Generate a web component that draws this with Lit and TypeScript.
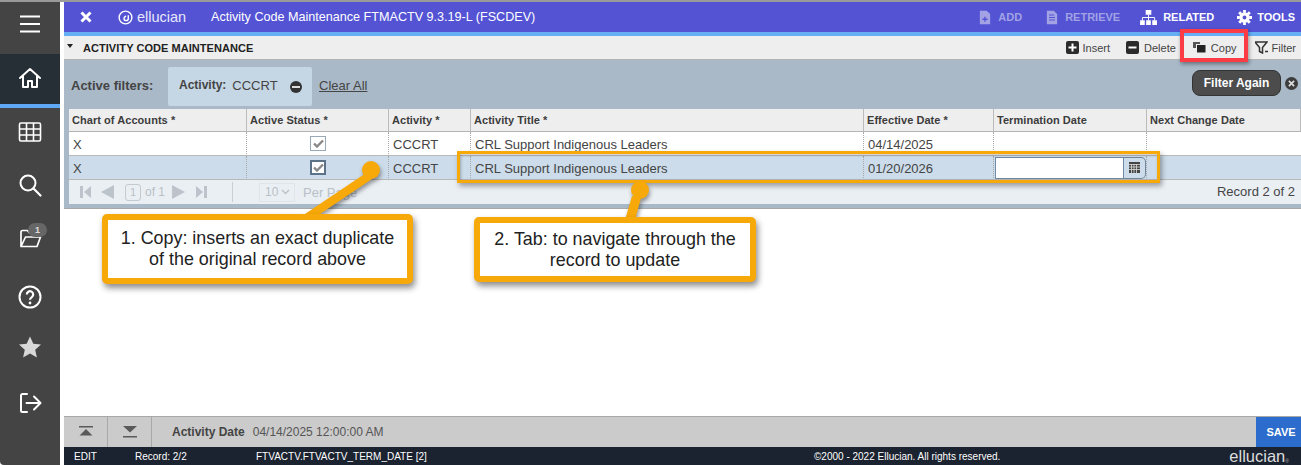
import { LitElement, html, css, svg } from "lit";
import { customElement } from "lit/decorators.js";

const ICO = {
  home: svg`<path d="M2 12 12 3l10 9M5 10v11h5v-6h4v6h5V10" fill="none" stroke="#fff" stroke-width="2" stroke-linejoin="round" stroke-linecap="round"/>`,
  grid: svg`<rect x="1.5" y="3" width="21" height="18" rx="1.5" fill="none" stroke="#fff" stroke-width="1.6"/><path d="M1.5 9h21M1.5 15h21M8.5 3v18M15.5 3v18" stroke="#fff" stroke-width="1.6"/>`,
  search: svg`<circle cx="10" cy="10" r="7.5" fill="none" stroke="#fff" stroke-width="2"/><path d="m15.5 15.5 7 7" stroke="#fff" stroke-width="2.2" stroke-linecap="round"/>`,
  folder: svg`<path d="M3 20.5V6a1.5 1.5 0 0 1 1.5-1.5h5l2 2.5H18a1.5 1.5 0 0 1 1.5 1.5V11M3 20.5h16l3.5-9.5H7.5z" fill="none" stroke="#fff" stroke-width="1.7" stroke-linejoin="round"/>`,
  help: svg`<circle cx="12" cy="12" r="10.5" fill="none" stroke="#fff" stroke-width="2"/><path d="M8.8 9.4a3.2 3.2 0 1 1 5 2.7c-1.2.8-1.8 1.2-1.8 2.6" fill="none" stroke="#fff" stroke-width="2.2"/><circle cx="12" cy="18" r="1.4" fill="#fff"/>`,
  star: svg`<path d="M12 1.5l3.3 7.3 7.7.8-5.8 5.2 1.7 7.7L12 18.5l-6.9 4 1.7-7.7L1 9.6l7.7-.8z" fill="#d8d8d8"/>`,
  out: svg`<path d="M9 3H4.5A1.5 1.5 0 0 0 3 4.5v15A1.5 1.5 0 0 0 4.500 21H9" fill="none" stroke="#fff" stroke-width="2" stroke-linecap="round"/><path d="M8.500 12H22M16 5.500l6.500 6.500-6.500 6.500" fill="none" stroke="#fff" stroke-width="2" stroke-linecap="round" stroke-linejoin="round"/>`,
};

const COLS = [
  { t: "Chart of Accounts *", a: "X", b: "X" },
  { t: "Active Status *", check: true },
  { t: "Activity *", a: "CCCRT", b: "CCCRT" },
  { t: "Activity Title *", a: "CRL Support Indigenous Leaders", b: "CRL Support Indigenous Leaders" },
  { t: "Effective Date *", a: "04/14/2025", b: "01/20/2026" },
  { t: "Termination Date", a: "", input: true },
  { t: "Next Change Date", a: "", b: "" },
];

@customElement("app-root")
export class AppRoot extends LitElement {
  static styles = css`
    :host { display: block; width: 1301px; height: 465px; overflow: hidden; position: relative; background: #fff; font-family: "Liberation Sans", Arial, sans-serif; color: #444; }
    .strip { height: 2px; background: #9a9a9a; }
    .shell { display: flex; height: 463px; }
    .side { width: 60px; background: #444; display: flex; flex-direction: column; flex: none; border-bottom-left-radius: 4px; }
    .si { display: flex; align-items: center; justify-content: center; position: relative; box-sizing: border-box; flex: none; }
    .burger { height: 52px; padding-bottom: 8px; }
    .burger span { display: block; width: 20px; height: 2.500px; background: #fff; box-shadow: 0 -7.500px 0 #fff, 0 7.500px 0 #fff; }
    .homei { height: 54px; background: #262e36; border-bottom: 4px solid #5ea8f5; padding-bottom: 2px; }
    .si svg { width: 24px; height: 24px; display: block; }
    .s-grid { height: 48px; }
    .s-search { height: 58px; }
    .s-folder { height: 48px; }
    .s-help { height: 70px; }
    .s-star { height: 30px; }
    .s-out { height: 82px; }
    .badge { position: absolute; left: 28px; top: 9px; width: 19px; height: 14px; border-radius: 7px; background: #666; color: #ddd; font-size: 9px; font-weight: bold; text-align: center; line-height: 14px; }
    .main { margin-left: 4px; flex: 1; min-width: 0; display: flex; flex-direction: column; }
    .top { height: 30px; background: #5353d4; color: #fff; display: flex; align-items: center; font-size: 12.500px; flex: none; position: relative; }
    .x { margin-left: 16px; width: 12px; height: 12px; display: block; }
    .logo { margin-left: 26px; display: flex; align-items: center; gap: 4px; font-size: 14.500px; width: 93px; color: #e8e8fa; flex: none; }
    .logo svg { width: 15px; height: 15px; }
    .title { white-space: nowrap; font-size: 12.600px; }
    .acts { margin-left: auto; display: flex; align-items: center; font-size: 11px; font-weight: bold; padding-right: 6px; }
    .act { display: flex; align-items: center; gap: 8px; }
    .act svg { width: 14px; height: 15px; display: block; }
    .act.off { color: #a2a2e4; gap: 7px; }
    .act.off svg { width: 12px; }
    .m-ret { margin-left: 24px; }
    .m-rel { margin-left: 20px; }
    .m-rel svg { width: 17px; }
    .m-rel span { margin-left: -2px; }
    .m-too { margin-left: 23px; gap: 5px; }
    .m-too svg { width: 15px; }
    .blue { height: 4px; background: #66aff5; flex: none; }
    .bar { height: 24px; background: #eee; border-bottom: 1px solid #b4b4b4; box-sizing: border-box; display: flex; align-items: center; flex: none; }
    .tri { width: 0; height: 0; border: 3.500px solid transparent; border-top: 4px solid #222; border-bottom: 0; margin: 0 0 4px 3px; }
    .bar-title { margin-left: 10px; font-size: 11px; font-weight: bold; color: #222; letter-spacing: 0.05px; }
    .tools { margin-left: auto; display: flex; align-items: center; font-size: 11px; color: #444; padding-right: 5px; }
    .tool { display: flex; align-items: center; gap: 4px; }
    .tool svg { width: 13px; height: 13px; display: block; }
    .t-del { margin-left: 16px; gap: 5px; }
    .t-cop { margin-left: 17px; gap: 5px; }
    .t-fil { margin-left: 18px; }
    .panel { background: #a9b9c8; height: 149px; border-bottom: 1px solid #a8a8a8; padding: 7px 0 0 5px; box-sizing: border-box; flex: none; }
    .filters { height: 42px; display: flex; align-items: stretch; font-size: 13px; }
    .fl { font-weight: bold; color: #444; align-self: center; margin: 0 2px 6px 2px; width: 95px; }
    .chip { width: 144px; height: 39px; background: #c5d6e4; border-radius: 2px; display: flex; align-items: center; box-sizing: border-box; padding: 0 0 3px 11px; }
    .chip b { margin-right: 6px; font-size: 12px; }
    .chip span { font-size: 13px; }
    .minus { width: 12px; height: 12px; border-radius: 50%; background: #333; margin-left: 12px; position: relative; top: 2px; display: flex; align-items: center; justify-content: center; }
    .minus i { display: block; width: 8px; height: 2.500px; background: #ddd; }
    .clear { margin: 0 0 0 7px; align-self: center; text-decoration: underline; padding-bottom: 6px; }
    .again { margin: 3px 0 0 auto; width: 89px; height: 26px; background: #4c4c4c; border: 1px solid #333; box-sizing: border-box; border-radius: 8px; color: #fff; font-weight: bold; display: flex; align-items: center; justify-content: center; font-size: 12px; }
    .clx { width: 13px; height: 13px; border-radius: 50%; background: #3c3c3c; margin: 10px 3px 0 4px; color: #ddd; display: flex; align-items: center; justify-content: center; }
    .clx svg { width: 7px; height: 7px; display: block; }
    .table { display: grid; grid-template-columns: 178px 142px 82px 393px 130px 153px 154px; grid-template-rows: 23px 24px 24px; background: #fff; font-size: 13px; }
    .th { background: #eee; border-bottom: 1px solid #b4b4b4; border-right: 1px solid #bbb; font-size: 11px; font-weight: bold; color: #3c3c3c; display: flex; align-items: center; padding-left: 3px; letter-spacing: .05px; box-sizing: border-box; }
    .th:last-child { border-right: none; padding-left: 4px; }
    .td { border-bottom: 1px solid #b8b8b8; border-right: 1px dotted #a8a8a8; display: flex; align-items: center; padding: 1px 0 0 4px; box-sizing: border-box; min-width: 0; color: #444; }
    .td.r2 { background: #ccdcea; }
    .td.last { border-right: none; }
    .td.c { justify-content: center; padding: 0 0 0 1px; }
    .cb { width: 16px; height: 15px; border: 1px solid #9aa9b8; background: #fff; box-sizing: border-box; display: flex; align-items: center; justify-content: center; }
    .r2 .cb { border: 2px solid #5c7289; }
    .cb svg { width: 11px; height: 9px; display: block; }
    .inp { display: flex; height: 22px; margin: -1px 0 0 -3px; width: 151px; border-radius: 0 5px 5px 0; }
    .inp .f { width: 129px; background: #fff; border: 1px solid #6f8aa5; box-sizing: border-box; }
    .inp .b { flex: 1; border: 1px solid #71879c; border-left: none; border-radius: 0 5px 5px 0; background: #ccdcea; display: flex; align-items: center; justify-content: center; }
    .inp svg { width: 11px; height: 11px; display: block; }
    .pager { height: 24px; background: #eaeff4; display: flex; align-items: center; font-size: 13px; color: #b9bfc6; position: relative; }
    .pager svg { display: block; }
    .pg { margin-left: 11px; width: 152px; display: flex; align-items: center; font-size: 12px; flex: none; }
    .g9 { width: 9px; } .g7 { width: 7px; } .g11 { width: 11px; }
    .pbox { width: 14px; height: 15px; border: 1px solid #c3cad1; border-radius: 3px; text-align: center; line-height: 15px; margin: 0 4px 0 11px; font-size: 11px; }
    .sep { width: 1px; height: 20px; background: #c9ced3; }
    .sel { margin-left: 26px; width: 36px; height: 19px; border: 1px solid #e0e4e8; box-sizing: border-box; display: flex; align-items: center; padding-left: 5px; gap: 3px; font-size: 12px; }
    .per { margin-left: 8px; }
    .rec { margin-left: auto; margin-right: 6px; color: #444; padding-bottom: 2px; }
    .space { flex: 1; }
    .foot { height: 31px; background: #cbcbcb; border-top: 1px solid #a8a8a8; box-sizing: border-box; display: flex; align-items: center; flex: none; font-size: 12px; }
    .fb { width: 44px; height: 100%; border-right: 1px solid #a8a8a8; display: flex; align-items: center; justify-content: center; box-sizing: border-box; }
    .fb svg { width: 16px; height: 13px; display: block; }
    .foot b { margin-left: 20px; margin-right: 8px; color: #444; }
    .foot span { color: #555; }
    .save { margin-left: auto; width: 45px; height: 100%; background: #2b6ccc; color: #fff; font-size: 11px; font-weight: bold; display: flex; align-items: center; justify-content: center; box-sizing: border-box; padding-left: 5px; }
    .status { height: 18px; background: #1b2330; color: #fff; display: flex; align-items: center; flex: none; font-size: 10px; position: relative; }
    .status span { flex: none; }
    .s1 { margin-left: 10px; width: 61px; }
    .s2 { width: 121px; }
    .s3 { width: 558px; }
    .status .brand { margin-left: auto; margin-right: 12px; font-size: 16.500px; color: #ddd; line-height: 14px; }
    .brand sup { font-size: 5px; line-height: 0; vertical-align: -1px; color: #aaa; }
    .callout { position: absolute; box-sizing: border-box; background: #fff; border: 6px solid #f7a90a; border-radius: 5px; box-shadow: 2px 4px 6px rgba(0,0,0,.45); display: flex; align-items: center; justify-content: center; text-align: center; color: #222; font-size: 17.900px; line-height: 21px; }
    .c1 { left: 102px; top: 214px; width: 311px; height: 70px; }
    .c2 { left: 474px; top: 217px; width: 282px; height: 65px; }
    .hl { position: absolute; left: 457px; top: 151px; width: 703px; height: 32px; box-sizing: border-box; border: 3px solid #f7a90a; box-shadow: 2px 3px 5px rgba(0,0,0,.35), inset 1px 1px 3px rgba(0,0,0,.25); }
    .red { position: absolute; left: 1180px; top: 29px; width: 68px; height: 33px; box-sizing: border-box; border: 4px solid #fb3c44; box-shadow: 1px 2px 4px rgba(0,0,0,.4); }
    .lines { position: absolute; left: 0; top: 0; width: 1301px; height: 465px; pointer-events: none; }
    .lines g { filter: drop-shadow(1px 3px 2px rgba(0,0,0,.4)); }
  `;

  private page(d: string, w = 12) {
    return html`<svg width=${w} height="14" viewBox="0 0 ${w} 14"><path d=${d} fill="#bcc3ca"/></svg>`;
  }

  render() {
    const cal = html`<svg viewBox="0 0 11 11"><rect width="11" height="11" fill="#444"/><path d="M0 2.500h11M0 5h11M0 7.500h11M2.500 2v9M5 2v9M7.500 2v9" stroke="#ddd" stroke-width=".8"/></svg>`;
    const check = html`<svg viewBox="0 0 11 9"><path d="M1 4.500 4 7.500 10 1.500" fill="none" stroke="#888" stroke-width="2.400"/></svg>`;
    return html`
      <div class="strip"></div>
      <div class="shell">
        <nav class="side">
          <div class="si burger"><span></span></div>
          <div class="si homei"><svg viewBox="0 0 24 24">${ICO.home}</svg></div>
          <div class="si s-grid"><svg viewBox="0 0 24 24">${ICO.grid}</svg></div>
          <div class="si s-search"><svg viewBox="0 0 24 24">${ICO.search}</svg></div>
          <div class="si s-folder"><svg viewBox="0 0 24 24">${ICO.folder}</svg><div class="badge">1</div></div>
          <div class="si s-help"><svg viewBox="0 0 24 24">${ICO.help}</svg></div>
          <div class="si s-star"><svg viewBox="0 0 24 24">${ICO.star}</svg></div>
          <div class="si s-out"><svg viewBox="0 0 24 24">${ICO.out}</svg></div>
        </nav>
        <div class="main">
          <header class="top">
            <svg class="x" viewBox="0 0 12 12"><path d="M1.500 1.500l9 9M10.500 1.500l-9 9" stroke="#fff" stroke-width="3"/></svg>
            <div class="logo"><svg viewBox="0 0 16 16"><circle cx="8" cy="8" r="6.800" fill="none" stroke="#fff" stroke-width="1.500"/><path d="M11 5.500v3.500a2.300 2.300 0 0 1-4.600 0 2.300 2.300 0 0 1 2.300-2.300" fill="none" stroke="#fff" stroke-width="1.500"/></svg>ellucian</div>
            <div class="title">Activity Code Maintenance FTMACTV 9.3.19-L (FSCDEV)</div>
            <div class="acts">
              <div class="act off"><svg viewBox="0 0 14 16"><path d="M1 0h8l4 4v12H1z" fill="#a2a2e4"/><path d="M7 7v6M4 10h6" stroke="#5353d4" stroke-width="1.600"/></svg>ADD</div>
              <div class="act off m-ret"><svg viewBox="0 0 14 16"><path d="M1 0h8l4 4v12H1z" fill="#a2a2e4"/><path d="M3.500 5h6M3.500 8h7M3.500 11h7" stroke="#5353d4" stroke-width="1.200"/></svg>RETRIEVE</div>
              <div class="act m-rel"><svg viewBox="0 0 18 16"><path d="M6 0h6v5H6zM0 11h5v5H0zM6.500 11h5v5h-5zM13 11h5v5h-5z" fill="#fff"/><path d="M9 5v6M2.500 11V8h13v3" fill="none" stroke="#fff"/></svg><span>RELATED</span></div>
              <div class="act m-too"><svg viewBox="0 0 16 16"><circle cx="8" cy="8" r="3.800" fill="none" stroke="#fff" stroke-width="3.400"/><path d="M8 0v16M0 8h16M2.300 2.300l11.400 11.400M13.700 2.300 2.300 13.700" stroke="#fff" stroke-width="3" stroke-dasharray="3 10 3"/></svg>TOOLS</div>
            </div>
          </header>
          <div class="blue"></div>
          <div class="bar">
            <div class="tri"></div>
            <div class="bar-title">ACTIVITY CODE MAINTENANCE</div>
            <div class="tools">
              <div class="tool"><svg viewBox="0 0 13 13"><rect width="13" height="13" rx="2" fill="#2b2b2b"/><path d="M6.500 2.500v8M2.500 6.500h8" stroke="#fff" stroke-width="2"/></svg>Insert</div>
              <div class="tool t-del"><svg viewBox="0 0 13 13"><rect width="13" height="13" rx="2" fill="#2b2b2b"/><path d="M2.500 6.500h8" stroke="#fff" stroke-width="2"/></svg>Delete</div>
              <div class="tool t-cop"><svg viewBox="0 0 13 13"><path d="M0 1h7v2H3v4H0z" fill="#555"/><rect x="4" y="4" width="8.500" height="7.500" fill="#222"/></svg>Copy</div>
              <div class="tool t-fil"><svg viewBox="0 0 13 13"><path d="M0 1h12L7.500 6.500V12l-3-1.500v-4z" fill="none" stroke="#333" stroke-width="1.500"/><path d="M10 10.500h3" stroke="#333" stroke-width="1.500"/></svg>Filter</div>
            </div>
          </div>
          <section class="panel">
            <div class="filters">
              <div class="fl">Active filters:</div>
              <div class="chip"><b>Activity:</b><span>CCCRT</span><div class="minus"><i></i></div></div>
              <div class="clear">Clear All</div>
              <div class="again">Filter Again</div>
              <div class="clx"><svg viewBox="0 0 8 8"><path d="M1 1l6 6M7 1 1 7" stroke="#ddd" stroke-width="2"/></svg></div>
            </div>
            <div class="table">
              ${COLS.map((c) => html`<div class="th">${c.t}</div>`)}
              ${COLS.map((c, i) => html`<div class="td ${c.check ? "c" : ""} ${i === 6 ? "last" : ""}">${c.check ? html`<div class="cb">${check}</div>` : c.a}</div>`)}
              ${COLS.map((c, i) => html`<div class="td r2 ${c.check ? "c" : ""} ${i === 6 ? "last" : ""}">${c.check ? html`<div class="cb">${check}</div>` : c.input ? html`<div class="inp"><div class="f"></div><div class="b">${cal}</div></div>` : c.b}</div>`)}
            </div>
            <div class="pager">
              <div class="pg">
                ${this.page("M0 1h3v12H0zM11 1v12L4 7z")}
                <span class="g9"></span>
                ${this.page("M13 0v14L0 7z", 13)}
                <span class="pbox">1</span>of 1
                <span class="g7"></span>
                ${this.page("M0 0v14l13-7z", 13)}
                <span class="g11"></span>
                ${this.page("M0 1v12l7-6zM8 1h3v12H8z")}
              </div>
              <div class="sep"></div>
              <div class="sel">10 <svg width="9" height="6" viewBox="0 0 9 6"><path d="M1 1l3.500 3.500L8 1" fill="none" stroke="#bcc3ca" stroke-width="1.500"/></svg></div>
              <div class="per">Per Page</div>
              <div class="rec">Record 2 of 2</div>
            </div>
          </section>
          <div class="space"></div>
          <div class="foot">
            <div class="fb"><svg viewBox="0 0 16 13"><path d="M1 0h14v1.500H1zM8 3l6.500 6.500h-13z" fill="#5a5a5a"/></svg></div>
            <div class="fb"><svg viewBox="0 0 16 13"><path d="M1 0h14L8 6.500zM1 10h14v1.500H1z" fill="#5a5a5a"/></svg></div>
            <b>Activity Date</b><span>04/14/2025 12:00:00 AM</span>
            <div class="save">SAVE</div>
          </div>
          <div class="status">
            <span class="s1">EDIT</span>
            <span class="s2">Record: 2/2</span>
            <span class="s3">FTVACTV.FTVACTV_TERM_DATE [2]</span>
            <span>©2000 - 2022 Ellucian. All rights reserved.</span>
            <span class="brand">ellucian<sup>®</sup></span>
          </div>
        </div>
      </div>
      <div class="hl"></div>
      <div class="red"></div>
      <svg class="lines" viewBox="0 0 1301 465">
        <g fill="#f7a90a" stroke="none">
          <path d="M366 173 372 179 317 216 302 216z"/>
          <circle cx="371" cy="170" r="9"/>
          <path d="M632 196 641 198 635 220 625 220z"/>
          <circle cx="640" cy="190" r="9"/>
        </g>
      </svg>
      <div class="callout c1">1. Copy: inserts an exact duplicate<br />of the original record above</div>
      <div class="callout c2">2. Tab: to navigate through the<br />record to update</div>
    `;
  }
}
